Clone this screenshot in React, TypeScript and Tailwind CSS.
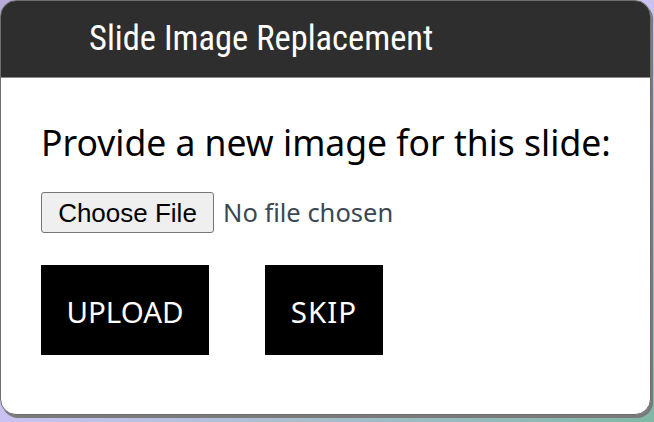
export default function App() {
  return (
    <div className="w-[654px] h-[422px] overflow-hidden bg-gradient-to-br from-[#b9a9d6] via-[#c9c2f2] to-[#7fb7a4]">
      <div className="w-[651px] h-[415px] bg-white rounded-[16px] border border-[#6e6e6e] shadow-[2px_3px_0_#7a7a7a] overflow-hidden flex flex-col font-['Noto_Sans',sans-serif]">
        <header className="h-[77px] shrink-0 bg-[#2e2e2e] border-b border-[#8a8a8a] pl-[88px] pt-[17px]">
          <h1 className="text-white text-[34.5px] leading-[40px] font-['Roboto_Condensed',sans-serif]">
            Slide Image Replacement
          </h1>
        </header>
        <main className="flex flex-col pl-[40px]">
          <p className="mt-[44px] text-black text-[35.5px] leading-[40px]">
            Provide a new image for this slide:
          </p>
          <div className="mt-[30px] flex items-center gap-[9px]">
            <button className="w-[173px] h-[41px] bg-[#efefef] border border-[#767676] rounded-[3px] text-black text-[26px] leading-none font-['Liberation_Sans',sans-serif]">
              Choose File
            </button>
            <span className="text-[#3a4852] text-[25.5px] leading-none">No file chosen</span>
          </div>
          <div className="mt-[32px] flex gap-[56px]">
            <button className="w-[168px] h-[90px] pt-[3px] bg-black text-white text-[29.5px] leading-none">
              UPLOAD
            </button>
            <button className="w-[118px] h-[90px] pt-[3px] bg-black text-white text-[29.5px] leading-none tracking-[1px]">
              SKIP
            </button>
          </div>
        </main>
      </div>
    </div>
  );
}
